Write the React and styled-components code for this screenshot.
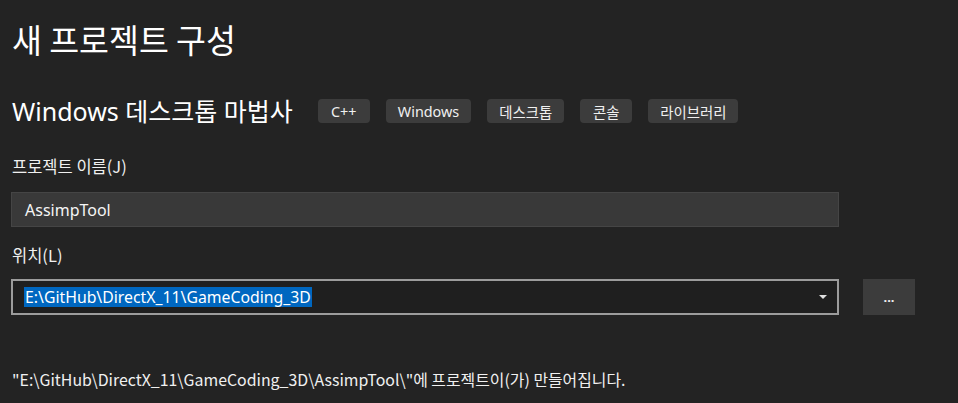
import React from 'react';
import styled, { createGlobalStyle } from 'styled-components';

const GlobalStyle = createGlobalStyle`
  html, body {
    margin: 0;
    padding: 0;
    background: #232323;
  }
  body {
    font-family: "Noto Sans", "Noto Sans CJK KR", sans-serif;
    color: #f2f2f2;
  }
`;

const Page = styled.div`
  width: 958px;
  height: 403px;
  box-sizing: border-box;
  padding: 16px 0 0 11px;
  overflow: hidden;
`;

const Title = styled.h1`
  margin: 0 0 0 1px;
  font-family: "Noto Sans CJK KR", sans-serif;
  font-weight: 400;
  font-size: 32.5px;
  line-height: 46px;
  color: #ffffff;
`;

const WizardRow = styled.div`
  display: flex;
  align-items: center;
  gap: 16px;
  margin: 32px 0 0 1px;
`;

const WizardName = styled.h2`
  margin: 0 9px 0 0;
  font-weight: 400;
  font-size: 25px;
  line-height: 34px;
  color: #ffffff;
`;

const Tag = styled.span`
  box-sizing: border-box;
  display: inline-flex;
  align-items: center;
  justify-content: center;
  min-width: 52px;
  height: 24px;
  padding: 0 12px;
  border-radius: 4px;
  background: #3c3c3c;
  font-size: 14.4px;
  color: #f0f0f0;
`;

const Label = styled.div`
  margin: ${(p) => p.$top}px 0 0 1px;
  font-family: "Noto Sans CJK KR", sans-serif;
  font-size: 16.5px;
  line-height: 20px;
  color: #f0f0f0;
`;

const TextBox = styled.div`
  box-sizing: border-box;
  width: 828px;
  height: 35px;
  margin-top: 16px;
  padding: 0 13px;
  display: flex;
  align-items: center;
  background: #393939;
  border: 1px solid #454545;
  font-size: 16px;
  color: #f5f5f5;
`;

const LocationRow = styled.div`
  display: flex;
  align-items: center;
  gap: 24px;
  margin-top: 14px;
`;

const Combo = styled.div`
  box-sizing: border-box;
  width: 828px;
  height: 36px;
  padding: 0 10px 0 11px;
  display: flex;
  align-items: center;
  justify-content: space-between;
  background: #1f1f1f;
  border: 2px solid #9c9c9c;
`;

const Selected = styled.span`
  background: #0067c0;
  color: #ffffff;
  font-size: 15.8px;
  line-height: 20px;
  padding: 0 1px;
`;

const Caret = styled.span`
  width: 0;
  height: 0;
  border-left: 4px solid transparent;
  border-right: 4px solid transparent;
  border-top: 4px solid #e0e0e0;
`;

const BrowseButton = styled.button`
  width: 52px;
  height: 36px;
  border: none;
  background: #3c3c3c;
  color: #f0f0f0;
  font-family: "Noto Sans", sans-serif;
  font-size: 13px;
  font-weight: 700;
  padding: 0;
`;

const Summary = styled.div`
  margin: 55px 0 0 1px;
  font-family: "Noto Sans CJK KR", sans-serif;
  font-size: 15.9px;
  line-height: 20px;
  color: #f0f0f0;
`;

const tags = ['C++', 'Windows', '데스크톱', '콘솔', '라이브러리'];

const App = () => {
  return (
    <>
      <GlobalStyle />
      <Page>
        <Title>새 프로젝트 구성</Title>
        <WizardRow>
          <WizardName>Windows 데스크톱 마법사</WizardName>
          {tags.map((t) => (
            <Tag key={t}>{t}</Tag>
          ))}
        </WizardRow>
        <Label $top={28}>프로젝트 이름(J)</Label>
        <TextBox>AssimpTool</TextBox>
        <Label $top={18}>위치(L)</Label>
        <LocationRow>
          <Combo>
            <Selected>E:\GitHub\DirectX_11\GameCoding_3D</Selected>
            <Caret />
          </Combo>
          <BrowseButton>...</BrowseButton>
        </LocationRow>
        <Summary>"E:\GitHub\DirectX_11\GameCoding_3D\AssimpTool\"에 프로젝트이(가) 만들어집니다.</Summary>
      </Page>
    </>
  );
};

export default App;
